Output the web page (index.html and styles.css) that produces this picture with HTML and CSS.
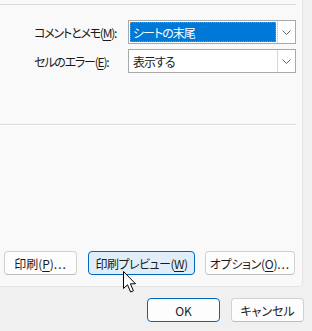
FILE: index.html
```html
<!DOCTYPE html>
<html lang="ja">

<head>
    <meta charset="UTF-8">
    <meta name="viewport" content="width=device-width, initial-scale=1.0">
    <title>ページ設定</title>
    <link rel="stylesheet" href="styles.css">
</head>

<body>
    <div class="panel">
        <div class="group">
            <div class="row">
                <label class="label">コメントとメモ(<u>M</u>):</label>
                <div class="combo">
                    <div class="combo-value selected"><span>シートの末尾</span></div>
                    <div class="combo-arrow">
                        <svg width="9" height="5" viewBox="0 0 9 5"><path d="M0.5 0.5 L4.5 4.5 L8.5 0.5" fill="none" stroke="#5f5f5f" stroke-width="1"/></svg>
                    </div>
                </div>
            </div>
            <div class="row">
                <label class="label">セルのエラー(<u>E</u>):</label>
                <div class="combo">
                    <div class="combo-value"><span>表示する</span></div>
                    <div class="combo-arrow">
                        <svg width="9" height="5" viewBox="0 0 9 5"><path d="M0.5 0.5 L4.5 4.5 L8.5 0.5" fill="none" stroke="#5f5f5f" stroke-width="1"/></svg>
                    </div>
                </div>
            </div>
        </div>
        <div class="separator"></div>
        <div class="print-buttons">
            <button class="btn btn-print">印刷(<u>P</u>)<span class="dots">...</span></button>
            <button class="btn btn-preview hover">印刷プレビュー(<u>W</u>)</button>
            <button class="btn btn-options">オプション(<u>O</u>)<span class="dots">...</span></button>
        </div>
    </div>

    <div class="footer">
        <button class="btn btn-ok default">OK</button>
        <button class="btn btn-cancel">キャンセル</button>
    </div>

    <svg class="cursor" width="15" height="23" viewBox="0 0 15 23">
        <path d="M0.5 0.5 L0.5 17.5 L4.5 13.8 L7.6 21 L10.4 19.8 L7.4 12.8 L12.5 12.8 Z" fill="#fff" stroke="#000" stroke-width="1" stroke-linejoin="miter"/>
    </svg>
</body>

</html>
```

FILE: styles.css
```css
body {
    margin: 0;
    width: 312px;
    height: 331px;
    background: #f0f0f0;
    font-family: "Noto Sans CJK JP", "Noto Sans", sans-serif;
    font-size: 12px;
    font-feature-settings: "palt" 1;
    color: #1b1b1b;
    position: relative;
    overflow: hidden;
}

u {
    text-decoration-thickness: 1px;
    text-underline-offset: 2px;
}

.panel {
    width: 303px;
    height: 287px;
    box-sizing: border-box;
    background: #f9f9f9;
    border-right: 1px solid #e3e3e3;
    border-bottom: 1px solid #e3e3e3;
    border-bottom-right-radius: 5px;
    padding-top: 4px;
}

.group {
    width: 296px;
    border-top: 1px solid #dadada;
    padding-top: 15px;
    display: flex;
    flex-direction: column;
    gap: 5px;
}

.row {
    display: flex;
    align-items: center;
}

.label {
    width: 94px;
    flex-shrink: 0;
    padding-left: 34px;
    white-space: nowrap;
    letter-spacing: -1.2px;
}

.combo {
    width: 168px;
    height: 24px;
    flex-shrink: 0;
    box-sizing: border-box;
    border: 1px solid #a9a9a9;
    background: #fff;
    display: flex;
}

.combo-value {
    flex: 1;
    margin: 1px;
    padding-left: 3px;
    display: flex;
    align-items: center;
    font-size: 12px;
    letter-spacing: -1px;
}

.combo-value.selected {
    background: #0078d7;
    color: #fff;
    outline: 1px dotted #e8741c;
    outline-offset: -1px;
}

.combo-arrow {
    width: 17px;
    border-left: 1px solid #d6d6d6;
    display: flex;
    align-items: center;
    justify-content: center;
}

.separator {
    width: 296px;
    height: 1px;
    background: #dadada;
    border-bottom: 1px solid #ffffff;
    margin-top: 51px;
}

.print-buttons {
    display: flex;
    padding-left: 4px;
    margin-top: 125px;
}

.btn {
    height: 24px;
    box-sizing: border-box;
    border: 1px solid #d1d1d1;
    border-bottom-color: #bdbdbd;
    border-radius: 4px;
    background: #fdfdfd;
    font-family: inherit;
    font-size: 12px;
    font-feature-settings: "palt" 1;
    color: #1b1b1b;
    padding: 0;
    white-space: nowrap;
}

.dots {
    letter-spacing: 1px;
}

.btn-print {
    width: 73px;
}

.btn-preview {
    width: 107px;
    margin-left: 11px;
    letter-spacing: -0.5px;
}

.btn-options {
    width: 90px;
    margin-left: 10px;
    letter-spacing: -0.3px;
}

.btn.hover {
    background: #e0eef9;
    border-color: #0067c0;
}

.footer {
    display: flex;
    justify-content: flex-end;
    gap: 11px;
    padding: 11px 8px 0 0;
}

.btn-ok,
.btn-cancel {
    width: 73px;
}

.btn.default {
    border-color: #0067c0;
}

.cursor {
    position: absolute;
    left: 123px;
    top: 271px;
}
```
